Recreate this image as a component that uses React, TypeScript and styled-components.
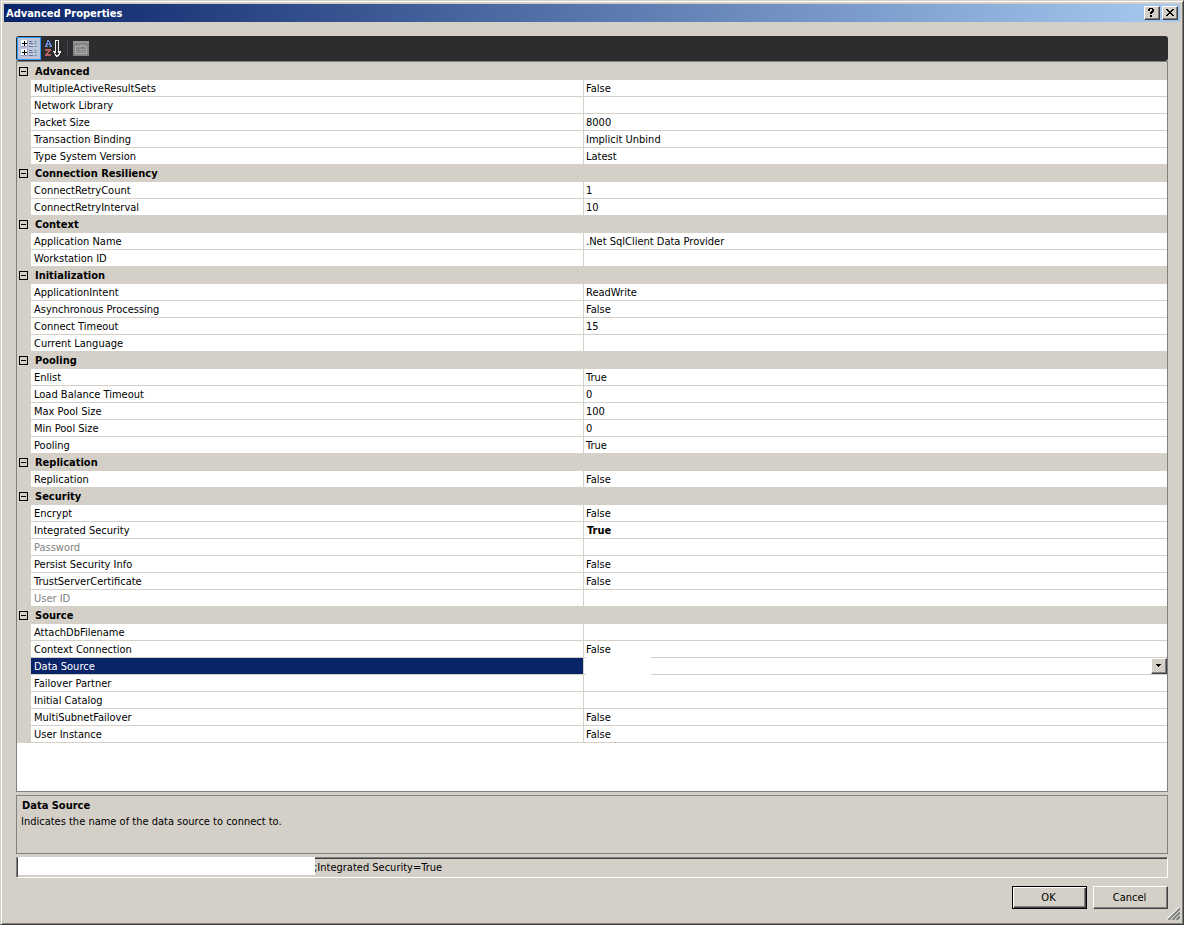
import React, { useState } from "react";
import styled, { createGlobalStyle, css } from "styled-components";

const face = "#d4d0c8";
const shadow = "#808080";
const darkShadow = "#404040";
const navy = "#0a246a";

const GlobalStyle = createGlobalStyle`
  *, *::before, *::after { box-sizing: border-box; }
  body { margin: 0; background: ${face}; }
  body, button, input, select {
    font-family: "DejaVu Sans Condensed", Tahoma, "DejaVu Sans", sans-serif;
    font-size: 11px;
    line-height: 16px;
    color: #000;
  }
`;

const raised = css`
  border: 1px solid;
  border-color: #fff ${darkShadow} ${darkShadow} #fff;
  box-shadow: inset -1px -1px 0 ${shadow};
  background: ${face};
`;

const Window = styled.main`
  display: flex;
  flex-direction: column;
  min-height: 100vh;
  padding: 2px;
  background: ${face};
  border: 1px solid;
  border-color: ${face} ${darkShadow} ${darkShadow} ${face};
  box-shadow: inset 1px 1px 0 #fff, inset -1px -1px 0 ${shadow};
  position: relative;
`;

const TitleBar = styled.header`
  display: flex;
  align-items: center;
  gap: 2px;
  height: 18px;
  margin: 1px 1px 0;
  padding: 0 2px;
  background: linear-gradient(to right, ${navy}, #a6caf0);
`;

const Title = styled.h1`
  flex: 1;
  margin: 0;
  padding-top: 1px;
  font-size: 11px;
  font-weight: bold;
  line-height: 17px;
  color: #fff;
`;

const CaptionButton = styled.button`
  ${raised}
  display: flex;
  align-items: center;
  justify-content: center;
  width: 16px;
  height: 14px;
  padding: 0 1px 1px 0;
`;

const Body = styled.div`
  display: flex;
  flex: 1;
  flex-direction: column;
  padding: 14px 13px 13px;
`;

const Toolbar = styled.div`
  display: flex;
  align-items: center;
  height: 25px;
  padding: 0 1px 1px;
  border-radius: 3px;
  background: #2d2d30;
`;

const ToolButton = styled.button<{ $active?: boolean }>`
  display: flex;
  align-items: center;
  justify-content: center;
  width: 24px;
  height: 23px;
  padding: 0;
  border: 1px solid ${(p) => (p.$active ? "#3399ff" : "transparent")};
  background: ${(p) => (p.$active ? "#bcc5dc" : "transparent")};
`;

const ToolDivider = styled.span`
  width: 1px;
  height: 16px;
  margin: 0 1px 0 2px;
  background: #46464a;
`;

const GridPanel = styled.section`
  flex: 1;
  border: 1px solid ${shadow};
  background: #fff;
`;

const Grid = styled.table`
  width: 100%;
  table-layout: fixed;
  border-collapse: collapse;
  border-top: 1px solid ${face};
`;

const GutterCol = styled.col`
  width: 14px;
`;

const NameCol = styled.col`
  width: 48%;
`;

const Row = styled.tr`
  height: 17px;
`;

const Gutter = styled.td`
  padding: 0;
  background: ${face};
`;

const CategoryCell = styled.th`
  padding: 1px 4px 0;
  background: ${face};
  font-weight: bold;
  text-align: left;
`;

const NameCell = styled.th<{ $selected: boolean; $dimmed: boolean }>`
  height: 17px;
  padding: 1px 3px 0;
  box-shadow: inset 0 -1px 0 ${face};
  background: ${(p) => (p.$selected ? navy : "#fff")};
  color: ${(p) => (p.$selected ? "#fff" : p.$dimmed ? shadow : "#000")};
  font-weight: normal;
  text-align: left;
`;

const ValueCell = styled.td<{ $bold: boolean; $editor: boolean }>`
  position: relative;
  height: 17px;
  padding: ${(p) => (p.$editor ? 0 : 1)}px 0 0 ${(p) => (p.$bold ? 4 : 3)}px;
  box-shadow: inset 1px -1px 0 ${face};
  font-weight: ${(p) => (p.$bold ? "bold" : "normal")};
`;

const Expander = styled.button`
  display: flex;
  align-items: center;
  justify-content: center;
  width: 9px;
  height: 9px;
  margin: 0 0 1px 2px;
  padding: 0;
  border: 1px solid #000;
  background: ${face};
`;

const Combo = styled.div`
  display: flex;
  height: 16px;
  margin-bottom: 1px;
`;

const ComboSelect = styled.select`
  flex: 1;
  min-width: 0;
  border: 0;
  appearance: none;
  background: transparent;
  outline: none;
`;

const ComboArrow = styled.span`
  ${raised}
  display: flex;
  align-items: center;
  justify-content: center;
  width: 16px;
  height: 16px;
  padding: 0 1px 1px 0;
  pointer-events: none;
`;

const ValueMask = styled.span`
  position: absolute;
  top: -2px;
  left: 3px;
  z-index: 1;
  width: 65px;
  height: 20px;
  background: #fff;
`;

const HelpPane = styled.section`
  height: 59px;
  margin-top: 3px;
  padding: 2px 4px;
  border: 1px solid ${shadow};
`;

const HelpTitle = styled.h2`
  margin: 0;
  padding-left: 1px;
  font-size: 11px;
  line-height: 16px;
`;

const HelpText = styled.p`
  margin: 0;
`;

const PreviewFrame = styled.div`
  position: relative;
  height: 21px;
  margin-top: 3px;
  border: 1px solid;
  border-color: ${shadow} #fff #fff ${shadow};
  box-shadow: inset 1px 1px 0 ${darkShadow};
`;

const PreviewInput = styled.input`
  display: block;
  width: 100%;
  height: 19px;
  padding: 0 2px 0 297px;
  border: 0;
  background: transparent;
  outline: none;
`;

const PreviewMask = styled.span`
  position: absolute;
  top: -1px;
  left: 1px;
  width: 297px;
  height: 18px;
  background: #fff;
`;

const Actions = styled.footer`
  display: flex;
  justify-content: flex-end;
  gap: 6px;
  margin-top: 8px;
`;

const ActionButton = styled.button<{ $primary?: boolean }>`
  ${raised}
  width: 75px;
  height: 23px;
  padding: 1px 2px 0 0;
  ${(p) =>
    p.$primary &&
    css`
      border-color: #000;
      box-shadow: inset 1px 1px 0 #fff, inset -1px -1px 0 ${darkShadow},
        inset -2px -2px 0 ${shadow};
    `}
`;

const SizeGrip = styled.svg`
  position: absolute;
  right: 3px;
  bottom: 4px;
`;

type Property = { name: string; value?: string; bold?: boolean; dimmed?: boolean; combo?: boolean };
type Category = { name: string; items: Property[] };

const categories: Category[] = [
  {
    name: "Advanced",
    items: [
      { name: "MultipleActiveResultSets", value: "False" },
      { name: "Network Library" },
      { name: "Packet Size", value: "8000" },
      { name: "Transaction Binding", value: "Implicit Unbind" },
      { name: "Type System Version", value: "Latest" },
    ],
  },
  {
    name: "Connection Resiliency",
    items: [
      { name: "ConnectRetryCount", value: "1" },
      { name: "ConnectRetryInterval", value: "10" },
    ],
  },
  {
    name: "Context",
    items: [
      { name: "Application Name", value: ".Net SqlClient Data Provider" },
      { name: "Workstation ID" },
    ],
  },
  {
    name: "Initialization",
    items: [
      { name: "ApplicationIntent", value: "ReadWrite" },
      { name: "Asynchronous Processing", value: "False" },
      { name: "Connect Timeout", value: "15" },
      { name: "Current Language" },
    ],
  },
  {
    name: "Pooling",
    items: [
      { name: "Enlist", value: "True" },
      { name: "Load Balance Timeout", value: "0" },
      { name: "Max Pool Size", value: "100" },
      { name: "Min Pool Size", value: "0" },
      { name: "Pooling", value: "True" },
    ],
  },
  { name: "Replication", items: [{ name: "Replication", value: "False" }] },
  {
    name: "Security",
    items: [
      { name: "Encrypt", value: "False" },
      { name: "Integrated Security", value: "True", bold: true },
      { name: "Password", dimmed: true },
      { name: "Persist Security Info", value: "False" },
      { name: "TrustServerCertificate", value: "False" },
      { name: "User ID", dimmed: true },
    ],
  },
  {
    name: "Source",
    items: [
      { name: "AttachDbFilename" },
      { name: "Context Connection", value: "False" },
      { name: "Data Source", combo: true },
      { name: "Failover Partner" },
      { name: "Initial Catalog" },
      { name: "MultiSubnetFailover", value: "False" },
      { name: "User Instance", value: "False" },
    ],
  },
];

const CategorizedIcon = () => (
  <svg width="18" height="17" viewBox="0 0 18 17" shapeRendering="crispEdges" aria-hidden="true">
    {[0, 9].map((y) => (
      <g key={y} transform={`translate(0 ${y})`}>
        <rect x="1" y="0" width="7" height="7" fill="#8e9ab8" />
        <rect x="1" y="0" width="6" height="6" fill="#fff" />
        <path d="M2 3h5v1H2zM4 1h1v5H4z" fill="#000" />
        <path d="M9 1h3v1H9zM9 3h4v1H9zM9 6h4v1H9z" fill="#66709a" />
        <path d="M14 1h3v1h-3zM14 3h3v1h-3zM14 6h3v1h-3z" fill="#7c9cac" />
      </g>
    ))}
  </svg>
);

const AlphabeticalIcon = () => (
  <svg width="18" height="17" viewBox="0 0 18 17" shapeRendering="crispEdges" aria-hidden="true">
    <path d="M3 0h2v1h1v2h1v2h1v2H5V6h1V5H3v1h1v1H1V5h1V3h1zM4 2v2h1V2z" fill="#6a8fdc" />
    <path d="M1 9h6v2H6v1H5v1H4v1h3v2H1v-2h1v-1h1v-1h1v-1H1z" fill="#b8605c" />
    <path d="M11 0h4v11h2v2h-1v2h-1v1h-1v1h-2v-1h-1v-2h-1v-2H9v-1h2zM12 1v12h-1v1h1v1h2v-1h1v-1h-1V1z" fill="#f0f0f0" fillRule="evenodd" />
  </svg>
);

const PagesIcon = () => (
  <svg width="16" height="15" viewBox="0 0 16 15" shapeRendering="crispEdges" aria-hidden="true">
    <rect width="16" height="15" fill="#858585" />
    <rect width="16" height="2" fill="#969696" />
    <path d="M2 5h5V4h5v1h2v8H2zM3 6v6h10V6h-2V5H8v1z" fill="#adadad" fillRule="evenodd" />
    <path d="M4 8h1v1H4zM6 8h6v1H6zM4 10h1v1H4zM6 10h6v1H6z" fill="#a2a2a2" />
  </svg>
);

const QuestionIcon = () => (
  <svg width="7" height="9" viewBox="0 0 7 9" shapeRendering="crispEdges" aria-hidden="true">
    <path d="M1 0h4v1h1v3H5v1H4v1H2V4h1V3h1V1H2v2H0V1h1zM2 7h2v2H2z" />
  </svg>
);

const CloseIcon = () => (
  <svg width="8" height="7" viewBox="0 0 8 7" shapeRendering="crispEdges" aria-hidden="true">
    <path d="M0 0h2v1h1v1h2V1h1V0h2v1H7v1H6v1H5v1h1v1h1v1h1v1H6V6H5V5H3v1H2v1H0V6h1V5h1V4h1V3H2V2H1V1H0z" />
  </svg>
);

export default function App() {
  const [collapsed, setCollapsed] = useState<Record<string, boolean>>({});
  const [selected, setSelected] = useState("Data Source");
  const toggle = (name: string) => setCollapsed((c) => ({ ...c, [name]: !c[name] }));

  return (
    <>
      <GlobalStyle />
      <Window>
        <TitleBar>
          <Title>Advanced Properties</Title>
          <CaptionButton type="button" aria-label="Help">
            <QuestionIcon />
          </CaptionButton>
          <CaptionButton type="button" aria-label="Close">
            <CloseIcon />
          </CaptionButton>
        </TitleBar>
        <Body>
          <Toolbar role="toolbar" aria-label="Property view">
            <ToolButton type="button" aria-label="Categorized" $active>
              <CategorizedIcon />
            </ToolButton>
            <ToolButton type="button" aria-label="Alphabetical">
              <AlphabeticalIcon />
            </ToolButton>
            <ToolDivider />
            <ToolButton type="button" aria-label="Property Pages" disabled>
              <PagesIcon />
            </ToolButton>
          </Toolbar>
          <GridPanel>
            <Grid aria-label="Properties">
              <colgroup>
                <GutterCol />
                <NameCol />
                <col />
              </colgroup>
              {categories.map((category) => (
                <tbody key={category.name}>
                  <Row>
                    <Gutter>
                      <Expander
                        type="button"
                        aria-label={`Toggle ${category.name}`}
                        aria-expanded={!collapsed[category.name]}
                        onClick={() => toggle(category.name)}
                      >
                        <svg width="5" height="5" viewBox="0 0 5 5" shapeRendering="crispEdges" aria-hidden="true">
                          <path d={collapsed[category.name] ? "M0 2h5v1H0zM2 0h1v5H2z" : "M0 2h5v1H0z"} />
                        </svg>
                      </Expander>
                    </Gutter>
                    <CategoryCell colSpan={2} scope="rowgroup">
                      {category.name}
                    </CategoryCell>
                  </Row>
                  {!collapsed[category.name] &&
                    category.items.map((item) => (
                      <Row key={item.name} onClick={() => setSelected(item.name)}>
                        <Gutter />
                        <NameCell scope="row" $selected={selected === item.name} $dimmed={!!item.dimmed}>
                          {item.name}
                        </NameCell>
                        <ValueCell $bold={!!item.bold} $editor={!!item.combo}>
                          {item.combo ? (
                            <Combo>
                              <ValueMask />
                              <ComboSelect aria-label={item.name} />
                              <ComboArrow>
                                <svg width="5" height="3" viewBox="0 0 5 3" shapeRendering="crispEdges" aria-hidden="true">
                                  <path d="M0 0h5v1H4v1H3v1H2V2H1V1H0z" />
                                </svg>
                              </ComboArrow>
                            </Combo>
                          ) : (
                            item.value
                          )}
                        </ValueCell>
                      </Row>
                    ))}
                </tbody>
              ))}
            </Grid>
          </GridPanel>
          <HelpPane>
            <HelpTitle>Data Source</HelpTitle>
            <HelpText>Indicates the name of the data source to connect to.</HelpText>
          </HelpPane>
          <PreviewFrame>
            <PreviewInput aria-label="Connection string" readOnly value=";Integrated Security=True" />
            <PreviewMask />
          </PreviewFrame>
          <Actions>
            <ActionButton type="button" $primary>
              OK
            </ActionButton>
            <ActionButton type="button">Cancel</ActionButton>
          </Actions>
        </Body>
        <SizeGrip width="13" height="13" viewBox="0 0 13 13" aria-hidden="true">
          <path d="M0 12L12 0M4 12l8-8M8 12l4-4" stroke="#fff" />
          <path d="M1.500 13L13 1.500M5.500 13L13 5.500M9.500 13L13 9.500" stroke={shadow} strokeWidth="2" />
        </SizeGrip>
      </Window>
    </>
  );
}
